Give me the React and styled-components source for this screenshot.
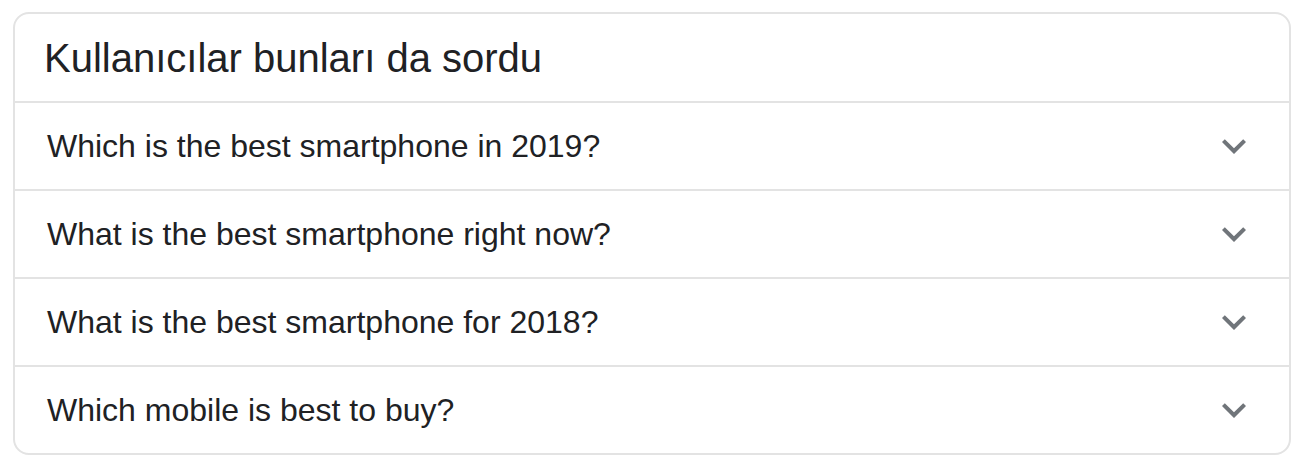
import React from "react";
import styled, { createGlobalStyle } from "styled-components";

const questions = [
  "Which is the best smartphone in 2019?",
  "What is the best smartphone right now?",
  "What is the best smartphone for 2018?",
  "Which mobile is best to buy?",
];

function Chevron() {
  return (
    <svg width="48" height="48" viewBox="0 0 24 24" aria-hidden="true">
      <path
        fill="#70757a"
        d="M16.59 8.59L12 13.17 7.41 8.59 6 10l6 6 6-6z"
      />
    </svg>
  );
}

export default function App() {
  return (
    <>
      <GlobalStyle />
      <Card>
        <Header>
          <Title>Kullanıcılar bunları da sordu</Title>
        </Header>
        {questions.map((q) => (
          <Row key={q}>
            <Question>{q}</Question>
            <IconBox>
              <Chevron />
            </IconBox>
          </Row>
        ))}
      </Card>
    </>
  );
}

const GlobalStyle = createGlobalStyle`
  html, body {
    margin: 0;
    padding: 0;
    background: #ffffff;
  }
  body {
    font-family: "Liberation Sans", Arial, sans-serif;
  }
`;

const Card = styled.div`
  box-sizing: border-box;
  width: 1278px;
  margin: 12px 0 0 13px;
  border: 2px solid #e3e3e3;
  border-radius: 16px;
  background: #ffffff;
  overflow: hidden;
`;

const Header = styled.div`
  height: 87px;
  display: flex;
  align-items: center;
  padding-left: 29px;
`;

const Title = styled.div`
  font-size: 40px;
  line-height: 1;
  color: #202124;
`;

const Row = styled.div`
  height: 86px;
  border-top: 2px solid #e3e3e3;
  display: flex;
  align-items: center;
  justify-content: space-between;
  padding: 0 31px 0 32px;
  cursor: pointer;
`;

const Question = styled.div`
  font-size: 32px;
  line-height: 1;
  color: #202124;
`;

const IconBox = styled.div`
  width: 48px;
  height: 48px;
  display: flex;
  align-items: center;
  justify-content: center;
`;
